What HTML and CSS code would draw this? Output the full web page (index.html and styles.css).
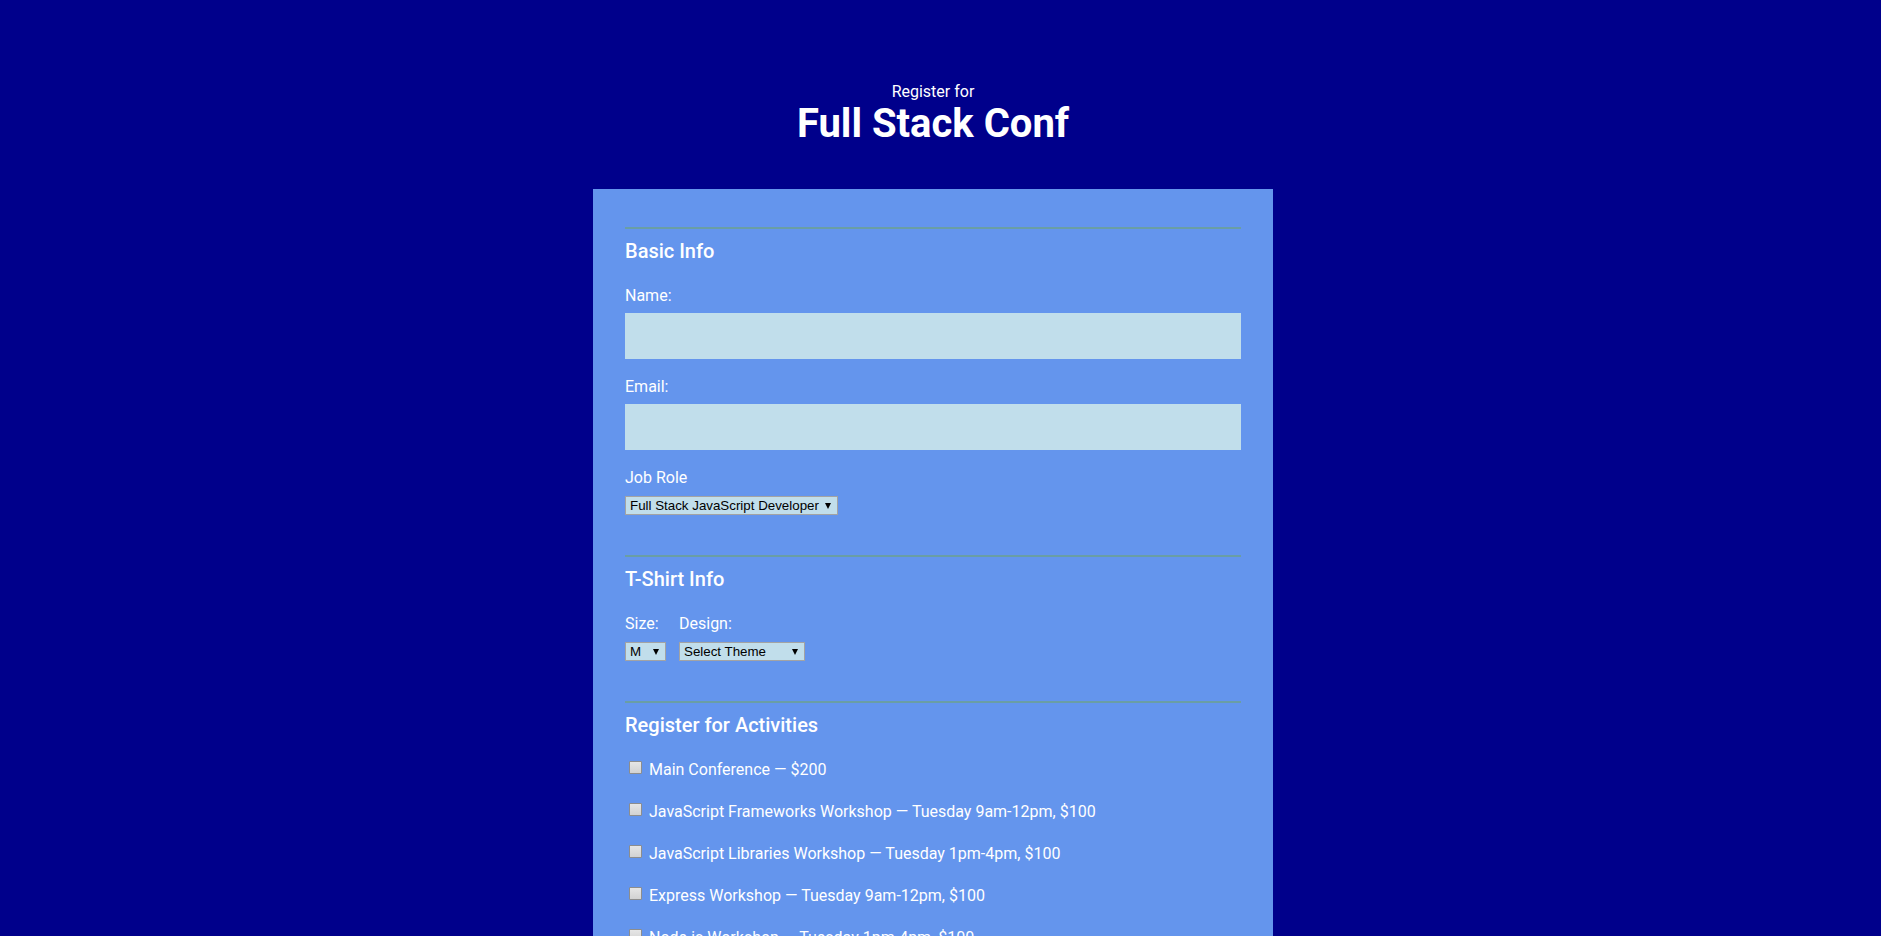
FILE: index.html
```html
<!DOCTYPE html>
<html lang="en">
<head>
<meta charset="utf-8">
<title>Full Stack Conf</title>
<link rel="stylesheet" href="styles.css">
</head>
<body>
  <header class="page-header">
    <p class="pre-title">Register for</p>
    <h1 class="title">Full Stack Conf</h1>
  </header>

  <form class="reg-form" action="#" method="post">
    <section class="section">
      <h2 class="section-title">Basic Info</h2>

      <label class="field-label" for="name">Name:</label>
      <input class="text-input" type="text" id="name" name="user_name">

      <label class="field-label" for="mail">Email:</label>
      <input class="text-input" type="email" id="mail" name="user_email">

      <label class="field-label" for="title">Job Role</label>
      <span class="select-wrap select-role">
        <select class="select" id="title" name="user_title">
          <option value="full-stack js developer">Full Stack JavaScript Developer</option>
          <option value="front-end developer">Front End Developer</option>
          <option value="back-end developer">Back End Developer</option>
          <option value="designer">Designer</option>
          <option value="student">Student</option>
          <option value="other">Other</option>
        </select>
      </span>
    </section>

    <section class="section">
      <h2 class="section-title">T-Shirt Info</h2>
      <div class="shirt-row">
        <div class="shirt-col">
          <label class="field-label" for="size">Size:</label>
          <span class="select-wrap select-size">
            <select class="select" id="size" name="user_size">
              <option value="small">S</option>
              <option value="medium" selected>M</option>
              <option value="large">L</option>
              <option value="extra large">XL</option>
            </select>
          </span>
        </div>
        <div class="shirt-col">
          <label class="field-label" for="design">Design:</label>
          <span class="select-wrap select-design">
            <select class="select" id="design" name="user_design">
              <option>Select Theme</option>
              <option value="js puns">Theme - JS Puns</option>
              <option value="heart js">Theme - I &#9829; JS</option>
            </select>
          </span>
        </div>
      </div>
    </section>

    <section class="section activities">
      <h2 class="section-title">Register for Activities</h2>
      <label class="activity"><input class="check" type="checkbox" name="all"> Main Conference — $200</label>
      <label class="activity"><input class="check" type="checkbox" name="js-frameworks"> JavaScript Frameworks Workshop — Tuesday 9am-12pm, $100</label>
      <label class="activity"><input class="check" type="checkbox" name="js-libs"> JavaScript Libraries Workshop — Tuesday 1pm-4pm, $100</label>
      <label class="activity"><input class="check" type="checkbox" name="express"> Express Workshop — Tuesday 9am-12pm, $100</label>
      <label class="activity"><input class="check" type="checkbox" name="node"> Node.js Workshop — Tuesday 1pm-4pm, $100</label>
      <label class="activity"><input class="check" type="checkbox" name="build-tools"> Build tools Workshop — Wednesday 9am-12pm, $100</label>
      <label class="activity"><input class="check" type="checkbox" name="npm"> npm Workshop — Wednesday 1pm-4pm, $100</label>
    </section>
  </form>
</body>
</html>
```

FILE: styles.css
```css
* {
  box-sizing: border-box;
}

body {
  margin: 0;
  padding-right: 15px;
  background: #00008b;
  color: #ffffff;
  font-family: Roboto, "Noto Sans", sans-serif;
  font-size: 16px;
  line-height: normal;
}

.page-header {
  text-align: center;
  padding-top: 82px;
}

.pre-title {
  margin: 0;
  font-size: 16px;
  line-height: 19px;
}

.title {
  margin: 0;
  font-size: 40px;
  font-weight: 700;
  line-height: 46px;
}

.reg-form {
  width: 680px;
  margin: 42px auto 0;
  padding: 38px 32px 40px;
  background: #6495ed;
}

.section {
  border-top: 2px solid #6a9ea4;
  padding: 10px 0 40px;
}

.section-title {
  margin: 0 0 23px;
  font-size: 20px;
  font-weight: 500;
  line-height: 24px;
}

.field-label {
  display: block;
  margin-bottom: 8px;
}

.text-input {
  display: block;
  width: 100%;
  height: 46px;
  margin: 0 0 18px;
  border: 0;
  background: #c1deeb;
  font: inherit;
}

.select-wrap {
  position: relative;
  display: inline-block;
  vertical-align: top;
}

.select-wrap::after {
  content: "";
  position: absolute;
  right: 7px;
  top: 7px;
  border-left: 3.5px solid transparent;
  border-right: 3.5px solid transparent;
  border-top: 6px solid #000;
  pointer-events: none;
}

.field-label + .select-wrap {
  margin-top: 1px;
}

.select {
  appearance: none;
  -webkit-appearance: none;
  display: block;
  height: 19px;
  margin: 0;
  padding: 0 18px 0 4px;
  border: 1px solid #a3a3a3;
  border-radius: 0;
  background: #c1deeb;
  color: #000;
  font-family: Arial, "Liberation Sans", sans-serif;
  font-size: 13.333px;
  line-height: 17px;
}

.select-role .select {
  width: 213px;
  padding-right: 16px;
}

.select-size .select {
  width: 41px;
}

.select-design .select {
  width: 126px;
}

.shirt-row {
  display: flex;
  gap: 13px;
}

.activity {
  display: block;
  margin-bottom: 23px;
}

.check {
  appearance: none;
  -webkit-appearance: none;
  width: 13px;
  height: 13px;
  margin: 0 3px 0 4px;
  vertical-align: 1px;
  border: 1px solid #8d8d8d;
  border-radius: 1px;
  background: linear-gradient(#e6e6e6, #d2d2d2);
}
```
